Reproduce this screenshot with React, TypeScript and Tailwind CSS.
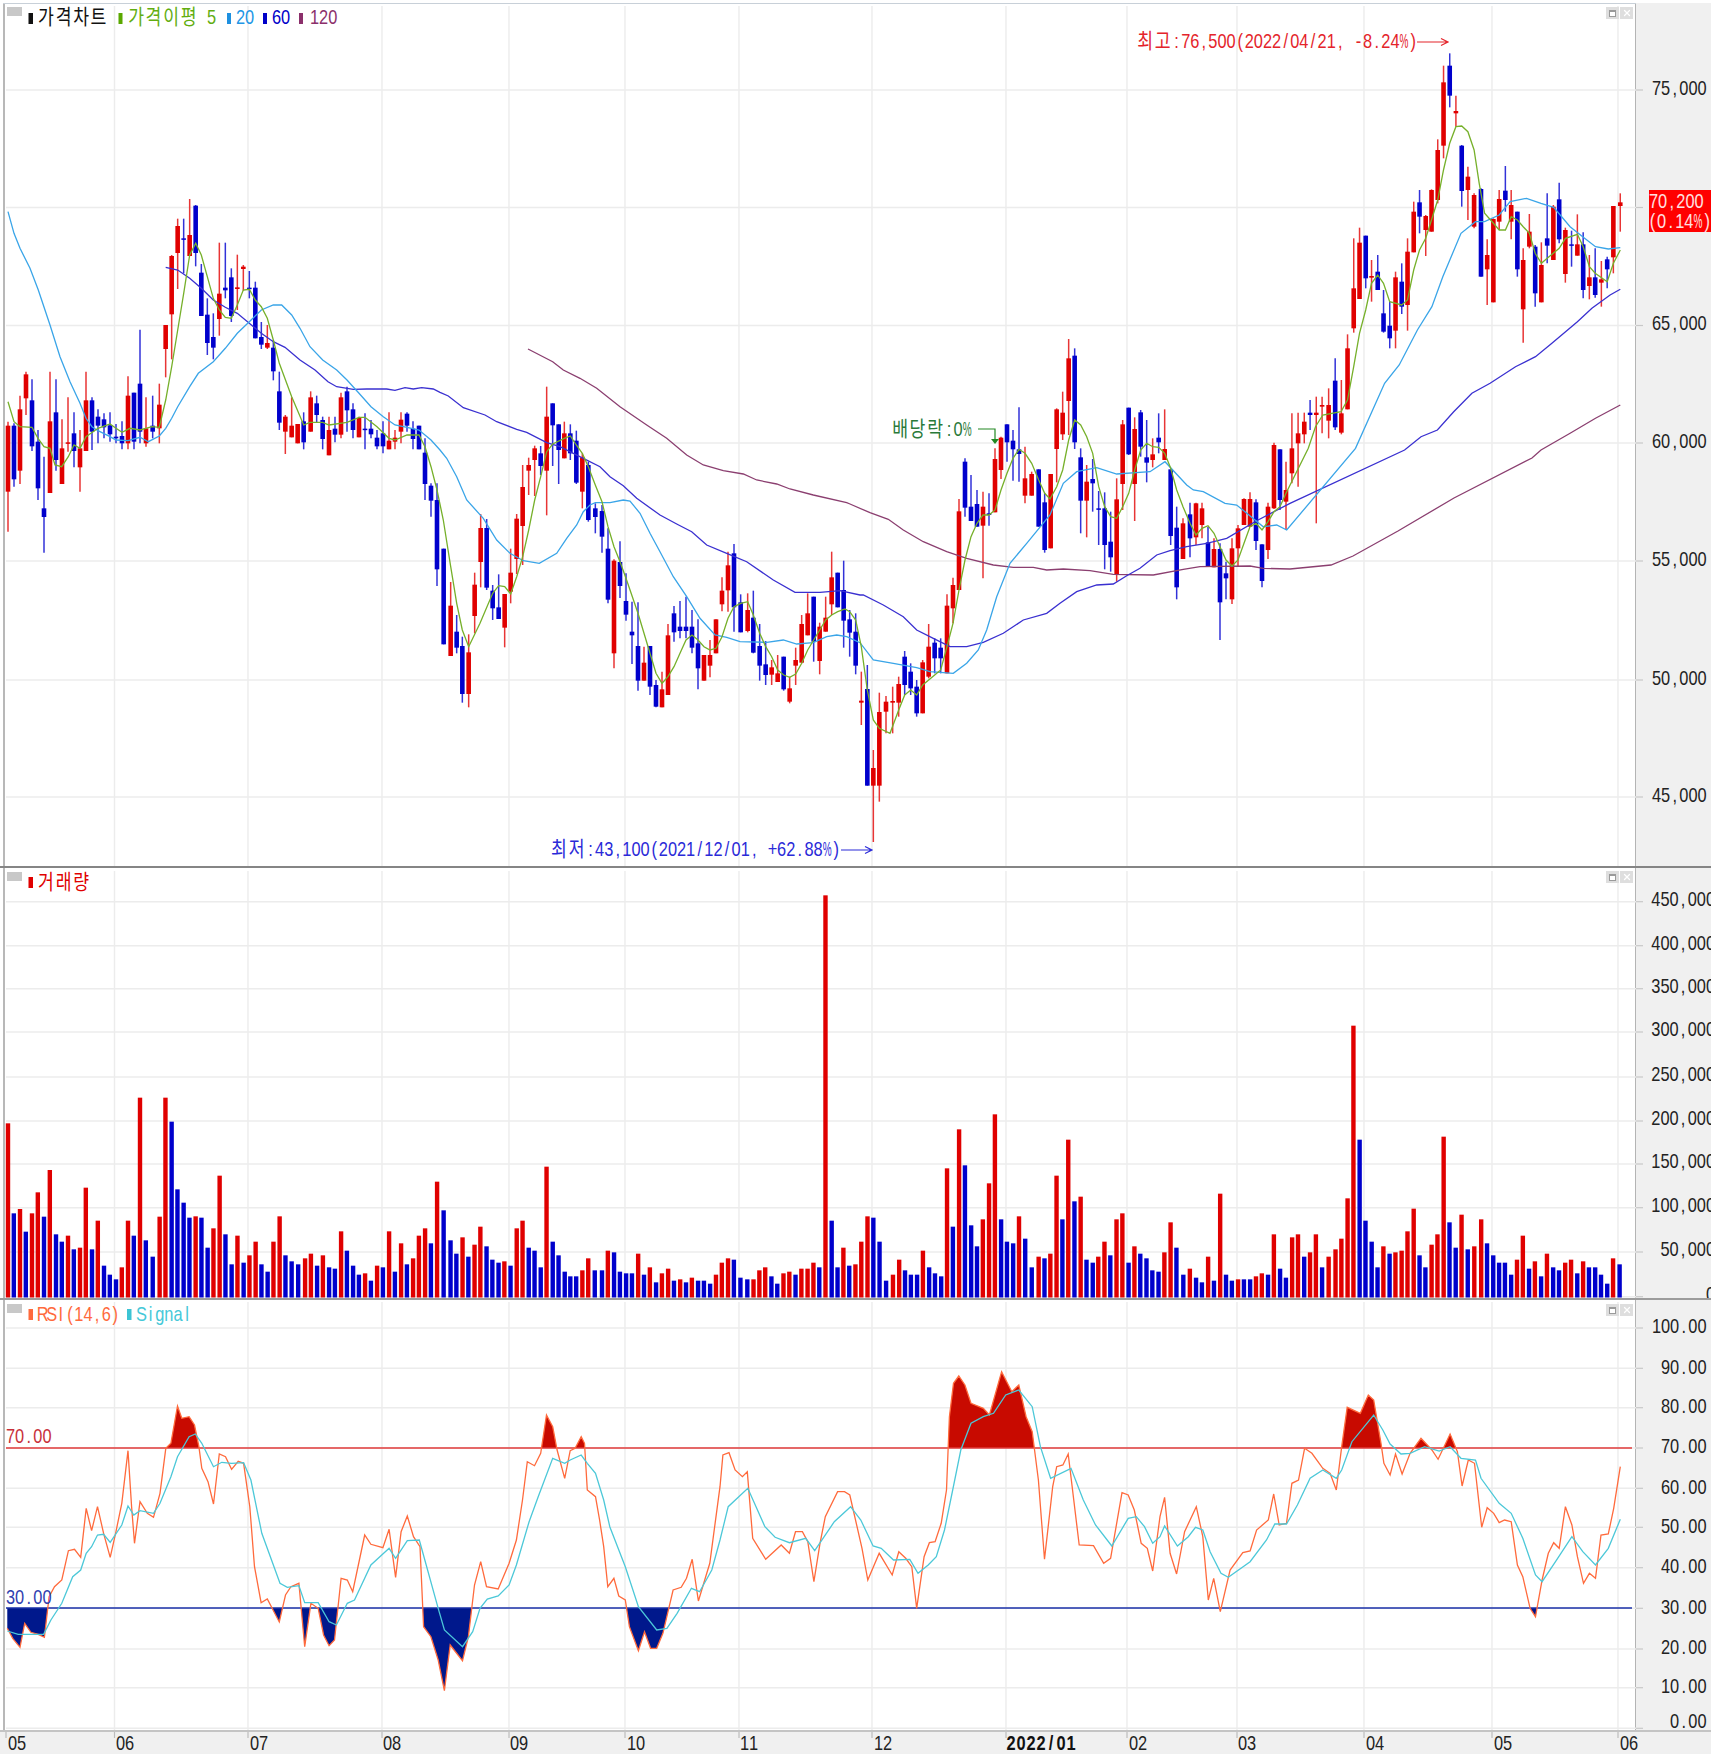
import { X } from "lucide-react";

type Seg = { ox: number; oy: number; sx: number };
type Pt = [number, number];

const A: Seg = { ox: 0, oy: 190, sx: 3 };
const B: Seg = { ox: 420, oy: 370, sx: 3 };
const C: Seg = { ox: 850, oy: 330, sx: 3 };
const D: Seg = { ox: 1141, oy: 0, sx: 2.75 };

const RED = "#e00000";
const BLUE = "#0000cc";

// [red?, x, high, body top, body bottom, low], read off the chart per section
const candlesA = [
  [1,24,695,707,905,1025],[0,42,700,707,868,890],[1,60,617,658,842,882],[1,78,545,553,625,675],[0,96,568,631,769,783],[0,114,720,755,895,930],
  [0,132,800,955,981,1088],[1,150,545,694,909,909],[0,168,568,667,810,842],[1,186,688,775,882,882],[1,204,622,757,760,785],[0,222,667,730,783,832],
  [1,240,720,775,832,905],[1,258,545,631,783,783],[0,276,622,631,725,780],[0,294,658,680,707,760],[0,312,670,688,712,745],[0,330,667,706,733,755],
  [0,348,702,740,745,760],[0,366,694,738,760,778],[1,384,559,617,760,778],[0,402,608,608,755,778],[0,420,419,581,725,760],[1,438,622,715,760,770],
  [0,458,617,707,725,745],[1,478,581,644,715,760],[1,497,405,405,477,562],[1,515,195,198,373,508],[1,533,86,108,189,297],[0,551,86,145,149,250],
  [1,569,27,135,198,198],[0,587,45,47,189,229],[0,604,222,248,378,378],[0,622,325,374,459,495],[0,640,370,441,473,508],[1,658,158,311,387,437],
  [0,676,158,293,301,325],[0,694,235,262,378,396],[1,712,194,292,297,360],[1,730,225,230,237,302],[0,748,243,293,297,325],[0,766,275,293,445,445],
  [0,784,396,441,464,477],[1,802,405,459,473,477],[0,820,450,473,544,571],[0,838,545,604,698,720],[1,856,675,680,725,792],[1,875,622,707,742,742],
  [1,893,702,702,760,760],[0,911,667,694,757,778],[1,932,604,622,725,725],[0,950,617,640,675,698],[0,968,680,690,747,778],[1,987,680,720,796,796],
  [0,1005,680,716,734,757],[1,1023,608,622,734,745],[0,1041,590,604,661,725],[0,1059,640,658,720,745],[1,1077,680,684,742,742],[0,1095,670,716,719,778],
  [0,1113,690,716,733,745],[0,1131,720,743,769,778],[0,1149,694,730,769,790],[1,1167,667,752,778,778],[1,1185,720,743,755,778],[1,1203,667,689,725,760],
  [0,1221,667,671,707,725],[0,1239,694,716,747,778],[0,1257,707,707,778,778],[0,1275,745,788,882,930],[0,1293,880,887,932,980],[0,1311,880,930,1138,1188],
];

const candlesB = [
  [0,71,536,536,823,823],[1,92,636,707,858,858],[0,110,735,785,833,850],[0,127,800,828,972,998],[1,146,793,847,972,1012],[1,164,608,644,738,790],
  [1,182,432,474,576,652],[0,200,447,474,653,660],[0,218,645,662,715,750],[0,236,613,712,747,747],[1,254,672,672,773,832],[1,272,536,608,665,700],
  [1,290,432,446,567,612],[1,308,285,351,468,585],[1,326,263,285,302,375],[1,344,227,235,270,378],[0,362,228,250,288,315],[1,380,50,140,302,436],
  [0,398,100,100,166,288],[0,416,163,163,240,342],[1,433,155,190,265,265],[0,451,163,190,250,270],[0,469,182,212,338,342],[1,487,250,262,365,415],
  [0,505,275,285,450,455],[0,526,400,415,441,490],[0,546,405,423,500,548],[0,564,475,536,689,700],[1,582,568,572,850,895],[0,600,514,576,648,684],
  [0,618,610,693,734,752],[0,636,695,785,796,882],[0,654,697,828,932,962],[1,672,830,878,932,932],[0,690,828,828,950,975],[0,708,930,945,1010,1012],
  [1,726,905,958,1012,1012],[1,744,762,796,975,975],[0,762,708,730,787,815],[0,780,693,770,783,805],[0,798,680,770,783,805],[0,816,720,770,833,850],
  [0,834,748,820,895,958],[1,852,855,855,932,932],[1,870,810,855,887,922],[1,888,748,748,850,850],[1,906,622,662,703,724],[1,924,545,586,661,725],
  [0,942,522,550,712,785],[0,962,673,697,787,787],[1,983,670,720,783,787],[0,1000,662,743,848,850],[0,1019,762,828,887,932],[0,1037,813,883,915,945],
  [1,1055,870,892,914,945],[1,1073,855,910,936,936],[0,1091,860,860,958,962],[1,1109,920,955,995,1000],[1,1127,833,870,887,945],[1,1145,735,762,878,880],
  [1,1163,670,730,796,796],[0,1181,680,680,815,875],[1,1199,758,770,873,913],[1,1217,680,743,785,785],[1,1235,545,622,703,735],[0,1253,608,608,712,712],
  [0,1271,572,660,752,833],[0,1289,720,748,788,860],[0,1307,730,785,887,913],
];

const candlesC = [
  [1,34,1025,1112,1118,1185],[0,52,1005,1077,1367,1367],[1,70,1260,1314,1367,1536],[1,88,1088,1146,1367,1415],[1,108,1098,1115,1145,1210],[1,128,1070,1113,1118,1210],
  [1,146,1040,1062,1118,1160],[0,164,963,980,1065,1095],[0,182,1000,1025,1075,1095],[0,200,1050,1070,1150,1160],[1,218,990,997,1150,1150],[1,236,882,950,1040,1045],
  [0,254,925,938,985,1030],[0,272,925,953,985,1030],[1,291,793,827,1030,1030],[1,309,743,765,835,880],[1,327,507,544,780,780],[0,345,385,395,533,560],
  [0,363,435,530,573,573],[0,381,480,522,590,590],[1,399,485,530,587,745],[0,417,490,550,555,587],[1,435,355,387,547,547],[1,453,320,323,420,447],
  [0,471,283,283,337,395],[0,489,300,332,358,452],[0,507,232,358,372,455],[1,525,350,445,497,520],[1,545,425,432,497,497],[0,566,418,418,590,590],
  [0,584,490,517,660,668],[1,602,432,432,655,655],[1,620,235,238,357,457],[1,638,185,248,313,330],[1,656,27,85,213,315],[0,674,55,77,337,357],
  [0,692,355,382,512,610],[1,710,405,455,512,622],[0,728,387,447,460,545],[0,746,483,535,538,645],[0,764,487,535,645,718],[0,782,545,635,682,725],
  [1,800,445,508,735,755],[1,818,270,283,462,540],[0,836,233,233,373,375],[1,854,262,297,462,573],[0,872,240,247,350,380],[0,890,270,382,398,457],
  [1,908,325,373,390,412],[0,926,250,323,337,370],[1,944,238,357,390,390],[0,962,418,418,618,645],[0,980,530,593,772,808],[1,999,565,580,687,687],
  [0,1020,518,553,625,682],[1,1038,518,520,622,645],[1,1056,518,535,585,625],[0,1074,590,637,710,710],[1,1092,625,657,712,712],[0,1110,640,657,817,930],
  [0,1128,695,730,745,808],[1,1146,625,655,808,822],[1,1164,585,595,655,710],[1,1182,505,507,585,585],[1,1200,487,507,590,590],[0,1218,508,517,633,660],
  [0,1236,643,643,753,772],[1,1254,518,530,660,687],[1,1272,338,345,535,537],[0,1290,358,358,510,540],[1,1308,395,480,515,600],
];

const candlesD = [
  [1,415,1240,1345,1420,1450],[1,432,1238,1300,1330,1460],[1,449,1238,1265,1303,1330],[0,465,1200,1238,1245,1290],[1,482,1190,1238,1245,1570],[1,498,1190,1215,1220,1300],
  [1,516,1165,1215,1262,1315],[0,534,1075,1142,1282,1290],[1,551,1140,1240,1298,1303],[1,568,1003,1045,1228,1228],[1,585,715,865,985,998],[1,601,683,728,897,897],
  [0,618,707,707,835,865],[1,634,780,828,833,905],[0,651,765,815,870,870],[0,667,870,940,995,998],[0,684,905,977,1015,1045],[1,700,815,832,992,1045],
  [0,717,790,845,920,942],[1,733,715,755,915,992],[1,750,605,635,757,757],[0,766,570,607,650,700],[1,783,645,648,690,768],[1,799,568,570,695,695],
  [1,816,418,450,600,610],[1,832,197,247,437,475],[0,849,160,197,287,322],[1,866,287,333,340,380],[0,882,435,437,573,620],[1,899,500,530,570,660],
  [1,916,580,585,680,685],[0,935,565,567,830,830],[1,952,718,765,808,915],[1,969,655,657,907,907],[1,985,570,597,665,690],[0,1002,498,572,600,635],
  [1,1018,570,615,665,718],[0,1035,635,635,808,830],[1,1051,745,780,928,1028],[1,1068,642,695,740,745],[0,1084,735,740,880,920],[1,1101,727,795,907,907],
  [0,1117,580,715,737,790],[1,1134,615,620,780,780],[0,1150,548,598,718,730],[1,1167,683,690,822,848],[0,1184,692,733,737,800],[1,1200,643,733,767,767],
  [0,1216,697,733,870,895],[1,1233,765,832,858,898],[0,1249,745,832,885,893],[1,1266,783,838,848,920],[0,1282,770,778,808,865],[1,1299,618,618,772,820],
  [1,1318,580,607,618,695],
];

function toCandles(seg: Seg, rows: number[][]) {
  return rows.map(([red, z, h, t, b, l]) => ({
    red: red === 1,
    x: seg.ox + z / seg.sx,
    high: seg.oy + h / 3,
    top: seg.oy + t / 3,
    bottom: seg.oy + b / 3,
    low: seg.oy + l / 3,
  }));
}

const candles = [
  ...toCandles(A, candlesA),
  ...toCandles(B, candlesB),
  ...toCandles(C, candlesC),
  ...toCandles(D, candlesD),
];

function pts(seg: Seg, flat: number[]): Pt[] {
  const out: Pt[] = [];
  for (let i = 0; i < flat.length; i += 2) {
    out.push([seg.ox + flat[i] / seg.sx, seg.oy + flat[i + 1] / 3]);
  }
  return out;
}

// sections overlap a little, keep x going forward only
function merge(...parts: Pt[][]): Pt[] {
  const out: Pt[] = [];
  for (const part of parts) {
    for (const p of part) {
      if (out.length === 0 || p[0] > out[out.length - 1][0]) out.push(p);
    }
  }
  return out;
}

const toD = (line: Pt[]) =>
  line.map((p, i) => `${i ? "L" : "M"}${p[0].toFixed(1)} ${p[1].toFixed(1)}`).join("");

const ma5 = merge(
  pts(A, [24,635,42,695,60,710,96,712,114,745,132,770,150,775,165,825,185,830,205,800,222,765,240,775,258,740,294,715,330,702,348,715,366,727,390,715,420,720,456,710,478,712,497,630,515,530,533,420,551,310,569,195,587,160,604,195,622,260,640,325,658,360,676,382,694,385,712,345,730,300,748,298,766,330,784,350,802,385,820,450,838,520,875,620,911,705,930,697,968,697,987,705,1041,697,1077,682,1095,682,1131,710,1167,745,1185,750,1221,735,1257,735,1275,770,1293,830,1311,900]),
  pts(B, [50,360,70,450,92,590,110,700,127,780,146,830,180,760,218,670,236,647,254,650,272,672,290,620,308,560,326,480,344,390,362,320,380,245,398,222,433,205,451,198,469,225,487,250,505,290,526,345,546,395,564,470,582,530,600,575,618,625,654,730,672,790,690,850,708,910,726,940,744,920,762,890,780,850,798,810,816,795,834,810,852,830,870,840,888,835,906,800,924,745,942,710,962,700,983,695,1000,735,1019,790,1037,830,1055,860,1073,900,1091,915,1109,922,1127,912,1145,880,1163,840,1181,810,1199,780,1217,750,1235,735,1253,725,1275,717,1289,725,1307,750]),
  pts(C, [16,870,34,950,52,1080,70,1170,88,1195,120,1210,146,1140,164,1095,182,1080,200,1095,218,1065,254,1035,272,1020,291,950,309,880,327,780,345,690,363,620,381,580,399,555,417,555,435,540,453,480,471,430,489,385,507,358,525,370,545,400,566,450,584,490,600,507,620,470,638,420,656,330,674,270,692,285,710,320,728,370,746,470,764,530,782,560,800,565,818,530,836,490,854,420,872,360,890,340,908,350,926,352,944,370,962,415,980,480,999,530,1020,580,1038,615,1056,595,1074,587,1092,610,1110,650,1128,690,1146,708,1164,690,1182,640,1200,590,1218,580,1236,600,1254,575,1272,545,1290,530,1308,490]),
  pts(D, [460,1345,480,1280,500,1245,550,1235,568,1200,585,1100,601,1000,618,930,634,850,651,825,667,850,684,905,717,915,733,900,750,810,766,750,783,715,799,660,816,600,832,510,849,430,866,380,882,378,899,395,916,450,930,550,945,640,969,670,985,690,1002,690,1018,650,1035,660,1051,680,1068,700,1084,760,1101,790,1117,775,1150,745,1167,715,1200,703,1216,740,1233,800,1249,820,1282,845,1299,790,1318,750]),
);

const ma20 = merge(
  pts(A, [24,65,42,130,60,175,90,235,115,300,150,405,180,500,210,575,240,640,258,685,276,710,294,722,330,740,348,750,384,752,420,742,445,755,478,738,497,715,515,685,533,650,569,590,595,550,640,515,676,475,712,430,748,395,784,360,820,345,845,345,875,375,900,415,930,470,968,510,1010,540,1041,570,1077,610,1113,650,1150,680,1185,705,1221,712,1257,720,1293,750,1320,780]),
  pts(B, [80,265,110,320,140,390,190,445,230,510,270,550,310,572,358,580,410,550,440,505,470,465,490,425,510,405,526,398,570,398,610,390,630,393,660,430,690,490,720,545,760,620,800,680,840,745,885,795,920,802,960,815,1040,817,1090,810,1130,822,1180,818,1220,800,1250,795,1280,800,1320,818]),
  pts(C, [70,990,130,1000,200,1013,240,1025,310,1030,350,1000,385,960,410,900,440,800,480,700,530,640,600,555,640,460,680,425,740,413,800,432,900,425,945,395,1010,465,1030,480,1060,485,1125,520,1160,525,1240,590,1280,585,1310,600]),
  pts(D, [590,1345,670,1150,710,1095,760,990,800,920,830,830,880,700,920,665,945,665,985,645,1015,605,1060,595,1100,610,1135,622,1180,680,1220,715,1250,740,1285,747,1318,743]),
);

const ma60 = merge(
  pts(A, [497,232,533,240,569,265,604,295,640,330,676,352,712,370,748,400,784,430,820,455,855,472,900,510,945,540,984,575,1010,590,1060,598,1100,597,1160,597,1185,601,1215,593,1240,597,1265,593,1300,597,1320,607]),
  pts(B, [40,58,85,78,130,113,195,135,230,155,290,178,320,187,380,218,420,230,490,265,540,290,570,320,610,347,650,385,720,435,770,462,815,485,860,525,920,550,980,575,1060,630,1125,667,1200,667,1260,662,1320,675]),
  pts(C, [40,795,100,825,160,860,200,900,250,925,300,950,350,950,400,937,460,910,520,870,590,850,630,820,680,785,740,765,790,762,830,737,870,715,920,675,960,662,1010,650,1070,640,1130,625,1220,572,1320,520]),
  pts(D, [725,1350,770,1310,815,1290,860,1235,910,1180,960,1150,1030,1100,1085,1070,1130,1030,1200,965,1240,925,1290,885,1318,868]),
);

const ma120 = merge(
  [[528, 349], [552.7, 361.7]],
  pts(B, [430,0,480,25,530,55,600,110,680,165,740,205,800,255,850,285,910,302,970,312,1010,330,1070,342,1110,357,1180,375,1280,398]),
  pts(C, [0,522,60,548,115,568,160,600,220,635,290,665,350,685,430,705,490,712,550,712,590,720,640,717,720,722,790,733,910,735,1000,718,1050,710,1200,708,1240,715,1320,717]),
  [[1331, 565], [1353, 556], [1398, 531], [1454, 498], [1532, 458]],
  pts(D, [1100,1350,1180,1300,1250,1255,1318,1215]),
);

const V1: Seg = { ox: 0, oy: 850, sx: 2.75 };
const V2: Seg = { ox: 550, oy: 880, sx: 2.904 };
const V3: Seg = { ox: 1090, oy: 1000, sx: 2.904 };

const vol1 = [[1,22,820],[0,38,1090],[1,55,1077],[0,71,1145],[1,88,1090],[1,104,1027],[0,121,1100],[1,137,960],[0,154,1153],[0,170,1175],[1,187,1157],[0,203,1198],[1,220,1193],[1,236,1013],[0,253,1198],[1,269,1112],[0,286,1247],[0,302,1274],[0,319,1288],[1,335,1252],[1,352,1112],[0,368,1157],[1,385,743],[0,401,1171],[0,420,1220],[1,439,1100],[1,455,743],[0,472,815],[0,488,1018],[0,505,1058],[0,521,1103],[1,538,1099],[0,554,1103],[0,571,1193],[1,587,1135],[1,604,977],[0,620,1153],[0,637,1243],[1,653,1157],[0,670,1238],[1,686,1216],[1,703,1175],[0,719,1243],[0,736,1265],[1,752,1175],[1,769,1099],[0,785,1216],[0,802,1234],[0,820,1243],[1,839,1225],[1,855,1211],[0,872,1247],[1,888,1216],[0,905,1252],[0,921,1256],[1,938,1144],[0,954,1202],[0,971,1247],[0,987,1274],[1,1004,1270],[0,1020,1292],[1,1037,1247],[0,1053,1252],[1,1070,1144],[0,1086,1265],[1,1103,1180],[0,1119,1243],[1,1136,1225],[1,1152,1157],[1,1169,1135],[0,1185,1180],[1,1202,995],[0,1220,1081],[0,1239,1171],[0,1255,1211],[1,1272,1162],[0,1288,1220],[1,1305,1184],[1,1321,1130],[0,1338,1189],[0,1354,1229],[0,1371,1238],[1,1387,1234],[0,1404,1247],[1,1421,1135],[1,1437,1112],[0,1454,1193],[0,1470,1202],[0,1487,1252],[1,1503,950],[0,1520,1175],[0,1536,1216],[0,1553,1265]];

const vol2 = [[0,59,1189],[0,76,1189],[1,94,1171],[1,111,1135],[0,130,1171],[0,151,1171],[1,168,1112],[0,186,1117],[0,203,1175],[0,221,1180],[0,238,1180],[1,256,1121],[0,273,1184],[1,290,1162],[0,308,1207],[1,325,1180],[1,343,1166],[0,360,1202],[1,378,1198],[0,395,1207],[1,412,1193],[0,430,1202],[0,447,1202],[0,465,1211],[1,482,1184],[1,499,1148],[1,517,1135],[0,534,1139],[0,553,1193],[0,573,1198],[1,591,1198],[1,608,1171],[1,625,1162],[0,643,1189],[0,660,1211],[1,678,1180],[1,695,1175],[0,713,1184],[1,730,1166],[1,748,1166],[1,765,1148],[0,782,1162],[1,800,46],[0,818,1022],[0,835,1162],[1,852,1103],[0,869,1157],[1,887,1153],[1,904,1085],[1,922,1009],[0,939,1013],[0,957,1085],[0,976,1202],[1,996,1184],[1,1014,1139],[0,1031,1171],[0,1048,1184],[0,1066,1184],[1,1083,1112],[0,1101,1162],[0,1118,1180],[0,1136,1189],[1,1153,865],[0,1170,1040],[1,1188,748],[0,1205,856],[0,1223,1036],[0,1240,1099],[1,1257,1018],[1,1275,910],[1,1292,703],[0,1310,1018],[0,1327,1085],[0,1345,1090],[1,1362,1009],[0,1380,1076],[0,1399,1162],[1,1419,1130],[0,1436,1135],[1,1453,1121],[1,1471,887],[0,1488,1018],[1,1505,779],[0,1523,964],[1,1541,950],[0,1558,1139]];

const vol3 = [[0,8,788],[1,24,770],[1,42,725],[0,59,766],[1,77,658],[1,94,640],[0,112,788],[1,129,739],[0,146,761],[0,164,775],[0,181,811],[0,199,815],[1,216,757],[1,234,667],[0,251,743],[0,271,824],[1,290,806],[0,308,833],[0,325,847],[1,343,770],[0,360,842],[1,378,581],[0,395,824],[0,412,842],[1,430,838],[0,447,838],[0,465,838],[1,482,829],[1,499,820],[0,517,824],[1,534,703],[0,552,806],[0,569,833],[1,587,712],[1,604,703],[0,622,770],[1,639,757],[1,656,703],[0,674,802],[1,693,770],[1,713,748],[1,730,716],[1,748,595],[1,765,77],[0,783,419],[0,800,662],[0,818,725],[0,835,802],[1,852,739],[0,870,761],[1,887,757],[1,905,752],[1,922,694],[1,940,626],[0,957,766],[0,974,802],[1,992,734],[1,1009,703],[1,1027,410],[0,1044,667],[0,1062,743],[1,1079,644],[0,1097,748],[1,1116,739],[1,1136,658],[0,1153,730],[0,1171,766],[0,1188,788],[0,1205,788],[0,1223,824],[1,1240,779],[1,1257,707],[0,1275,806],[1,1292,784],[0,1310,829],[1,1327,761],[0,1345,802],[0,1362,811],[1,1380,788],[1,1397,779],[0,1415,820],[1,1432,784],[0,1449,802],[0,1467,802],[0,1484,824],[0,1502,851],[1,1519,775],[0,1538,793]];

const toBars = (seg: Seg, rows: number[][]) =>
  rows.map(([red, z, t]) => ({ red: red === 1, x: seg.ox + z / seg.sx, top: seg.oy + t / 3 }));

const bars = [...toBars(V1, vol1), ...toBars(V2, vol2), ...toBars(V3, vol3)];

const R1: Seg = { ox: 0, oy: 1300, sx: 2.75 };
const R2: Seg = { ox: 520, oy: 1300, sx: 2.45 };
const R3: Seg = { ox: 1141, oy: 1250, sx: 2.75 };

const rsi = merge(
  pts(R1, [20,985,35,1015,55,1042,68,970,85,997,105,1003,122,1012,135,890,150,860,170,840,188,752,205,748,222,772,237,625,252,692,268,620,285,700,303,772,318,700,335,610,352,452,362,620,370,730,385,605,405,640,422,652,440,580,456,445,470,430,488,318,500,355,520,350,535,375,547,440,555,505,572,545,587,612,603,462,620,470,637,508,655,484,670,490,687,620,700,800,718,908,735,897,768,966,785,885,800,860,822,850,838,1040,855,910,875,925,890,1005,905,1037,920,1020,938,835,955,840,970,875,1003,705,1020,733,1053,743,1070,688,1088,832,1103,695,1120,648,1137,710,1155,740,1165,980,1185,1010,1205,1080,1222,1172,1238,1035,1272,1082,1288,1010,1305,855,1322,785,1338,860,1370,867,1400,790,1420,720,1437,600,1450,485,1470,497,1487,460,1503,345,1520,380,1532,450,1553,535,1568,452]),
  pts(R2, [135,445,150,410,158,430,165,570,185,590,195,660,205,740,215,860,230,835,242,888,258,900,268,980,290,1052,305,995,320,1045,335,1045,350,1000,375,870,395,862,408,835,422,778,437,903,455,830,465,790,478,670,490,560,497,465,512,458,527,510,545,530,557,515,570,715,602,778,640,735,660,760,675,695,692,695,705,725,720,845,735,730,748,650,778,575,795,575,808,585,838,745,852,840,880,760,912,825,928,755,945,775,960,800,972,925,990,770,1003,728,1017,725,1032,670,1045,570,1052,350,1062,250,1075,228,1090,255,1105,310,1135,325,1150,345,1180,215,1205,275,1222,255,1240,350,1255,395,1270,540,1285,778,1305,560,1315,500,1330,495,1343,462,1370,735,1405,737,1430,790,1447,775,1475,578,1490,585,1505,630,1522,730,1537,745,1550,813,1568,650]),
  pts(R3, [65,742,80,910,98,972,120,845,152,770,170,860,185,1050,200,985,218,1085,245,960,280,908,300,903,318,840,350,810,365,732,380,825,400,820,415,700,433,690,450,595,470,610,500,655,520,670,537,720,552,590,567,472,603,490,625,435,640,450,660,580,668,640,685,675,700,612,718,672,740,610,770,565,800,600,817,628,850,552,870,605,883,708,900,630,917,640,937,832,952,773,970,790,985,818,1000,810,1018,815,1035,945,1050,980,1070,1075,1085,1100,1103,990,1120,910,1135,878,1150,895,1167,770,1185,825,1200,920,1217,1000,1233,970,1250,985,1265,855,1285,852,1300,775,1318,650]),
);

const signal = merge(
  pts(R1, [20,993,50,1003,120,1003,140,960,170,910,200,830,222,810,237,760,252,740,268,705,285,703,303,727,335,675,352,618,368,645,385,632,422,640,440,610,470,530,488,470,520,410,537,402,555,430,587,500,610,487,637,490,670,488,690,540,720,700,770,850,790,862,822,857,838,908,875,908,905,965,925,975,955,910,975,900,1020,795,1070,745,1088,775,1120,722,1153,720,1205,925,1222,990,1272,1040,1300,995,1320,925,1340,897,1370,888,1400,855,1420,795,1455,665,1480,590,1520,475,1553,490,1568,480]),
  pts(R2, [150,465,165,490,185,520,205,600,220,680,258,800,290,920,335,990,360,985,385,940,420,865,440,875,470,810,490,720,510,620,558,565,600,680,625,712,660,728,700,715,722,752,770,665,810,620,835,660,865,738,885,745,915,780,955,778,975,820,1000,795,1020,770,1040,690,1060,570,1080,450,1105,370,1135,350,1160,340,1190,285,1222,270,1255,320,1275,440,1300,535,1350,505,1380,600,1410,675,1450,738,1490,655,1510,650,1530,680,1550,730,1568,710]),
  pts(R3, [65,828,100,888,130,860,150,832,170,840,190,905,220,970,240,982,300,935,345,870,368,822,400,822,430,765,465,685,500,660,537,685,552,660,580,575,640,495,665,540,685,582,715,612,740,610,780,590,820,603,850,590,880,625,920,630,935,685,985,760,1018,790,1050,865,1085,975,1103,995,1140,935,1185,860,1215,905,1250,945,1285,895,1318,808]),
);

const monthXs = [114.5, 248, 382, 509, 625, 739, 872, 1006, 1127, 1237, 1364, 1492, 1618];

const ADV: Record<string, number> = {
  ",": 0.278, ".": 0.278, ":": 0.278, "/": 0.278, I: 0.278, i: 0.222, l: 0.222,
  "(": 0.333, ")": 0.333, "-": 0.333, "+": 0.584, R: 0.722, S: 0.667, " ": 0.278,
};

// the chart's font is a narrow fixed pitch one, so every glyph gets its own slot.
// the percent sign is far too wide for a slot, it goes out as its own squeezed text.
function Mono({ x, y, text, fill, bold, pitch = 9.1 }: { x: number; y: number; text: string; fill: string; bold?: boolean; pitch?: number }) {
  const runs: { sx: number; size: number; xs: string[]; text: string }[] = [];
  let cur = x;
  for (const ch of text) {
    const hangul = ch > "\u1100";
    const percent = ch === "%";
    const sx = percent ? 0.5 : 0.82;
    const size = hangul ? 21 : 20;
    const box = hangul ? 17.5 : pitch;
    const adv = hangul ? size : (percent ? 0.889 : ADV[ch] ?? 0.556) * size;
    const pos = (cur + box / 2) / sx - adv / 2;
    const last = runs[runs.length - 1];
    if (last && last.size === size && last.sx === sx) {
      last.xs.push(pos.toFixed(1));
      last.text += ch;
    } else {
      runs.push({ sx, size, xs: [pos.toFixed(1)], text: ch });
    }
    cur += box;
  }
  return (
    <g fill={fill} fontWeight={bold ? 700 : 400}>
      {runs.map((r, i) => (
        <text key={i} transform={`scale(${r.sx} 1)`} x={r.xs.join(" ")} y={y + 7} fontSize={r.size} className="whitespace-pre">
          {r.text}
        </text>
      ))}
    </g>
  );
}

function Grid({ ys, top, bottom }: { ys: number[]; top: number; bottom: number }) {
  return (
    <g>
      {monthXs.map((x) => (
        <line key={x} x1={x} x2={x} y1={top} y2={bottom} stroke="#ececec" strokeWidth={1.4} />
      ))}
      {ys.map((y) => (
        <g key={y}>
          <line x1={6} x2={1636} y1={y} y2={y} stroke="#ececec" strokeWidth={1.4} />
          <line x1={1636} x2={1643} y1={y} y2={y} stroke="#c8c8c8" strokeWidth={1.2} />
        </g>
      ))}
    </g>
  );
}

function WindowButtons({ className }: { className: string }) {
  return (
    <div className={`absolute left-[1606px] flex gap-[1px] ${className}`}>
      <div className="flex h-[12px] w-[13px] items-center justify-center bg-[#dedede]">
        <div className="h-[7px] w-[7px] border border-t-2 border-[#9a9a9a] bg-white" />
      </div>
      <div className="flex h-[12px] w-[13px] items-center justify-center bg-[#dedede]">
        <X size={10} strokeWidth={3} className="text-white" />
      </div>
    </div>
  );
}

function Panel({ top, height, border, children }: { top: number; height: number; border: string; children: React.ReactNode }) {
  return (
    <section className={`relative flex shrink-0 border-b-2 pl-[3px] ${border}`} style={{ height }}>
      <div className="w-[1633px] border-r border-l-2 border-r-[#b4b4b4] border-l-[#b8b8b8] bg-white" />
      <div className="flex-1 bg-[#f0f0f0]" />
      <svg className="absolute inset-0 h-full w-full overflow-hidden" viewBox={`0 ${top} 1711 ${height - 2}`}>
        {children}
      </svg>
    </section>
  );
}

const LEGEND_GRAY = "#c8c8c8";

function PricePanel() {
  const ys = [90, 207.5, 325.5, 443, 561, 680, 797];
  const labels = ["75,000", "70,000", "65,000", "60,000", "55,000", "50,000", "45,000"];
  return (
    <Panel top={3} height={865} border="border-b-[#858585]">
      <Grid ys={ys} top={6} bottom={866} />
      {candles.map((c, i) => {
        const color = c.red ? RED : BLUE;
        return (
          <g key={i}>
            <line x1={c.x} x2={c.x} y1={c.high} y2={c.low} stroke={c.red ? "#e83535" : "#3232d8"} strokeWidth={1.5} />
            <rect x={c.x - 2.3} y={c.top} width={4.6} height={Math.max(c.bottom - c.top, 1.5)} fill={color} />
          </g>
        );
      })}
      <path d={toD(ma120)} fill="none" stroke="#8b3f70" strokeWidth={1.3} />
      <path d={toD(ma60)} fill="none" stroke="#3a30d0" strokeWidth={1.3} />
      <path d={toD(ma20)} fill="none" stroke="#3aa5e8" strokeWidth={1.3} />
      <path d={toD(ma5)} fill="none" stroke="#76b02a" strokeWidth={1.3} />

      <rect x={7} y={7} width={15} height={9} fill={LEGEND_GRAY} />
      <rect x={28.5} y={13} width={4.5} height={11} fill="#111111" />
      <Mono x={38} y={17.5} text="가격차트" fill="#111111" />
      <rect x={118.5} y={13} width={4} height={11} fill="#5aa800" />
      <Mono x={128} y={17.5} text="가격이평 5" fill="#62ad10" />
      <rect x={227} y={13} width={4} height={11} fill="#1e90e0" />
      <Mono x={236} y={17.5} text="20" fill="#2196e6" />
      <rect x={263} y={13} width={4} height={11} fill="#0000c8" />
      <Mono x={272} y={17.5} text="60" fill="#0000c8" />
      <rect x={299} y={13} width={4} height={11} fill="#8b2f6b" />
      <Mono x={310} y={17.5} text="120" fill="#8b2f6b" />

      <Mono x={1137} y={41} text="최고:76,500(2022/04/21, -8.24%)" fill="#e4242a" />
      <path d="M1417 42H1448M1441 38.5L1448 42L1441 45.5" fill="none" stroke="#e4242a" strokeWidth={1.2} />
      <Mono x={551} y={849} text="최저:43,100(2021/12/01, +62.88%)" fill="#2a2ad8" />
      <path d="M841 850H872M865 846.5L872 850L865 853.5" fill="none" stroke="#2a2ad8" strokeWidth={1.2} />
      <Mono x={892} y={429} text="배당락:0%" fill="#2a7a3a" />
      <path d="M978 429H995V440" fill="none" stroke="#228822" strokeWidth={1.2} />
      <path d="M991 439H999L995 444Z" fill="#228822" />

      {labels.map((t, i) => (
        <Mono key={t} x={1652} y={ys[i] - 2} text={t} fill="#222222" />
      ))}
      <rect x={1649} y={190} width={62} height={42} fill="#ff0000" />
      <Mono x={1649} y={201} text="70,200" fill="#ffe0e0" />
      <Mono x={1648} y={221} text="(0.14%)" fill="#ffe0e0" />
    </Panel>
  );
}

function VolumePanel() {
  const ys = [901.7, 945.7, 988.7, 1032, 1077, 1121, 1164, 1207.7, 1252, 1296.7];
  const labels = ["450,000", "400,000", "350,000", "300,000", "250,000", "200,000", "150,000", "100,000", "50,000", "0"];
  return (
    <Panel top={868} height={432} border="border-b-[#9c9c9c]">
      <Grid ys={ys} top={871} bottom={1298} />
      {bars.map((b, i) => (
        <rect key={i} x={b.x - 2.2} y={b.top} width={4.4} height={1297.5 - b.top} fill={b.red ? RED : BLUE} />
      ))}
      <rect x={7} y={872} width={15} height={9} fill={LEGEND_GRAY} />
      <rect x={28.5} y={877} width={4.5} height={11} fill={RED} />
      <Mono x={38} y={882} text="거래량" fill="#e00000" />
      {labels.map((t, i) => (
        <Mono key={t} x={1715 - t.length * 9.1} y={ys[i] - 2.5} text={t} fill="#222222" />
      ))}
    </Panel>
  );
}

function RsiPanel() {
  const ys = [1328, 1368.3, 1407.7, 1448, 1488.3, 1527.3, 1567.7, 1608.3, 1649, 1687.7, 1728.3];
  const labels = ["100.00", "90.00", "80.00", "70.00", "60.00", "50.00", "40.00", "30.00", "20.00", "10.00", "0.00"];
  const first = rsi[0];
  const last = rsi[rsi.length - 1];
  const over = `${toD(rsi)}L${last[0]} 1448L${first[0]} 1448Z`;
  const under = `${toD(rsi)}L${last[0]} 1608L${first[0]} 1608Z`;
  return (
    <Panel top={1300} height={432} border="border-b-[#c4c4c4]">
      <Grid ys={ys} top={1302} bottom={1730} />
      <clipPath id="above70">
        <rect x={0} y={1300} width={1636} height={148} />
      </clipPath>
      <clipPath id="below30">
        <rect x={0} y={1608} width={1636} height={122} />
      </clipPath>
      <path d={over} fill="#c80a00" clipPath="url(#above70)" />
      <path d={under} fill="#00188c" clipPath="url(#below30)" />
      <line x1={6} x2={1632} y1={1448} y2={1448} stroke="#e03a3a" strokeWidth={1.6} />
      <line x1={6} x2={1632} y1={1608} y2={1608} stroke="#1a30a8" strokeWidth={1.6} />
      <path d={toD(rsi)} fill="none" stroke="#ff6a3c" strokeWidth={1.3} />
      <path d={toD(signal)} fill="none" stroke="#4cc8d8" strokeWidth={1.3} />

      <rect x={7} y={1304} width={15} height={9} fill={LEGEND_GRAY} />
      <rect x={28.5} y={1309} width={4.5} height={11} fill="#ff6a3c" />
      <Mono x={38} y={1314} text="RSI(14,6)" fill="#ff6a3c" />
      <rect x={127} y={1309} width={4.5} height={11} fill="#3cc4d4" />
      <Mono x={137} y={1314} text="Signal" fill="#45c8d8" />
      <Mono x={6} y={1436.5} text="70.00" fill="#c8303a" />
      <Mono x={6} y={1597} text="30.00" fill="#3040b0" />

      {labels.map((t, i) => (
        <Mono key={t} x={1706.5 - t.length * 9.1} y={i === 10 ? 1720.7 : ys[i] - 1.5} text={t} fill="#222222" />
      ))}
    </Panel>
  );
}

const months = [
  { x: 8, t: "05" }, { x: 116, t: "06" }, { x: 250, t: "07" }, { x: 383, t: "08" }, { x: 510, t: "09" }, { x: 627, t: "10" },
  { x: 740, t: "11" }, { x: 874, t: "12" }, { x: 1129, t: "02" }, { x: 1238, t: "03" }, { x: 1366, t: "04" }, { x: 1494, t: "05" }, { x: 1620, t: "06" },
];

function TimeAxis() {
  return (
    <div className="h-[22px] shrink-0 bg-[#f0f0f0]">
      <svg className="h-full w-full" viewBox="0 1732 1711 22">
        {[6, ...monthXs].map((x) => (
          <line key={x} x1={x} x2={x} y1={1732} y2={1738} stroke="#bdbdbd" strokeWidth={1.2} />
        ))}
        {months.map((m) => (
          <Mono key={m.x} x={m.x} y={1743} text={m.t} fill="#222222" />
        ))}
        <Mono x={1006} y={1743} text="2022/01" fill="#111111" bold pitch={10} />
      </svg>
    </div>
  );
}

export default function App() {
  return (
    <div className="relative flex h-[1754px] w-[1711px] flex-col overflow-hidden bg-white pt-[3px] font-['Liberation_Sans','Noto_Sans_CJK_KR',sans-serif]">
      <div className="absolute top-[3px] left-[3px] z-10 h-px w-[1633px] bg-[#c8d0d8]" />
      <PricePanel />
      <VolumePanel />
      <RsiPanel />
      <TimeAxis />
      <WindowButtons className="top-[7px]" />
      <WindowButtons className="top-[871px]" />
      <WindowButtons className="top-[1304px]" />
    </div>
  );
}
